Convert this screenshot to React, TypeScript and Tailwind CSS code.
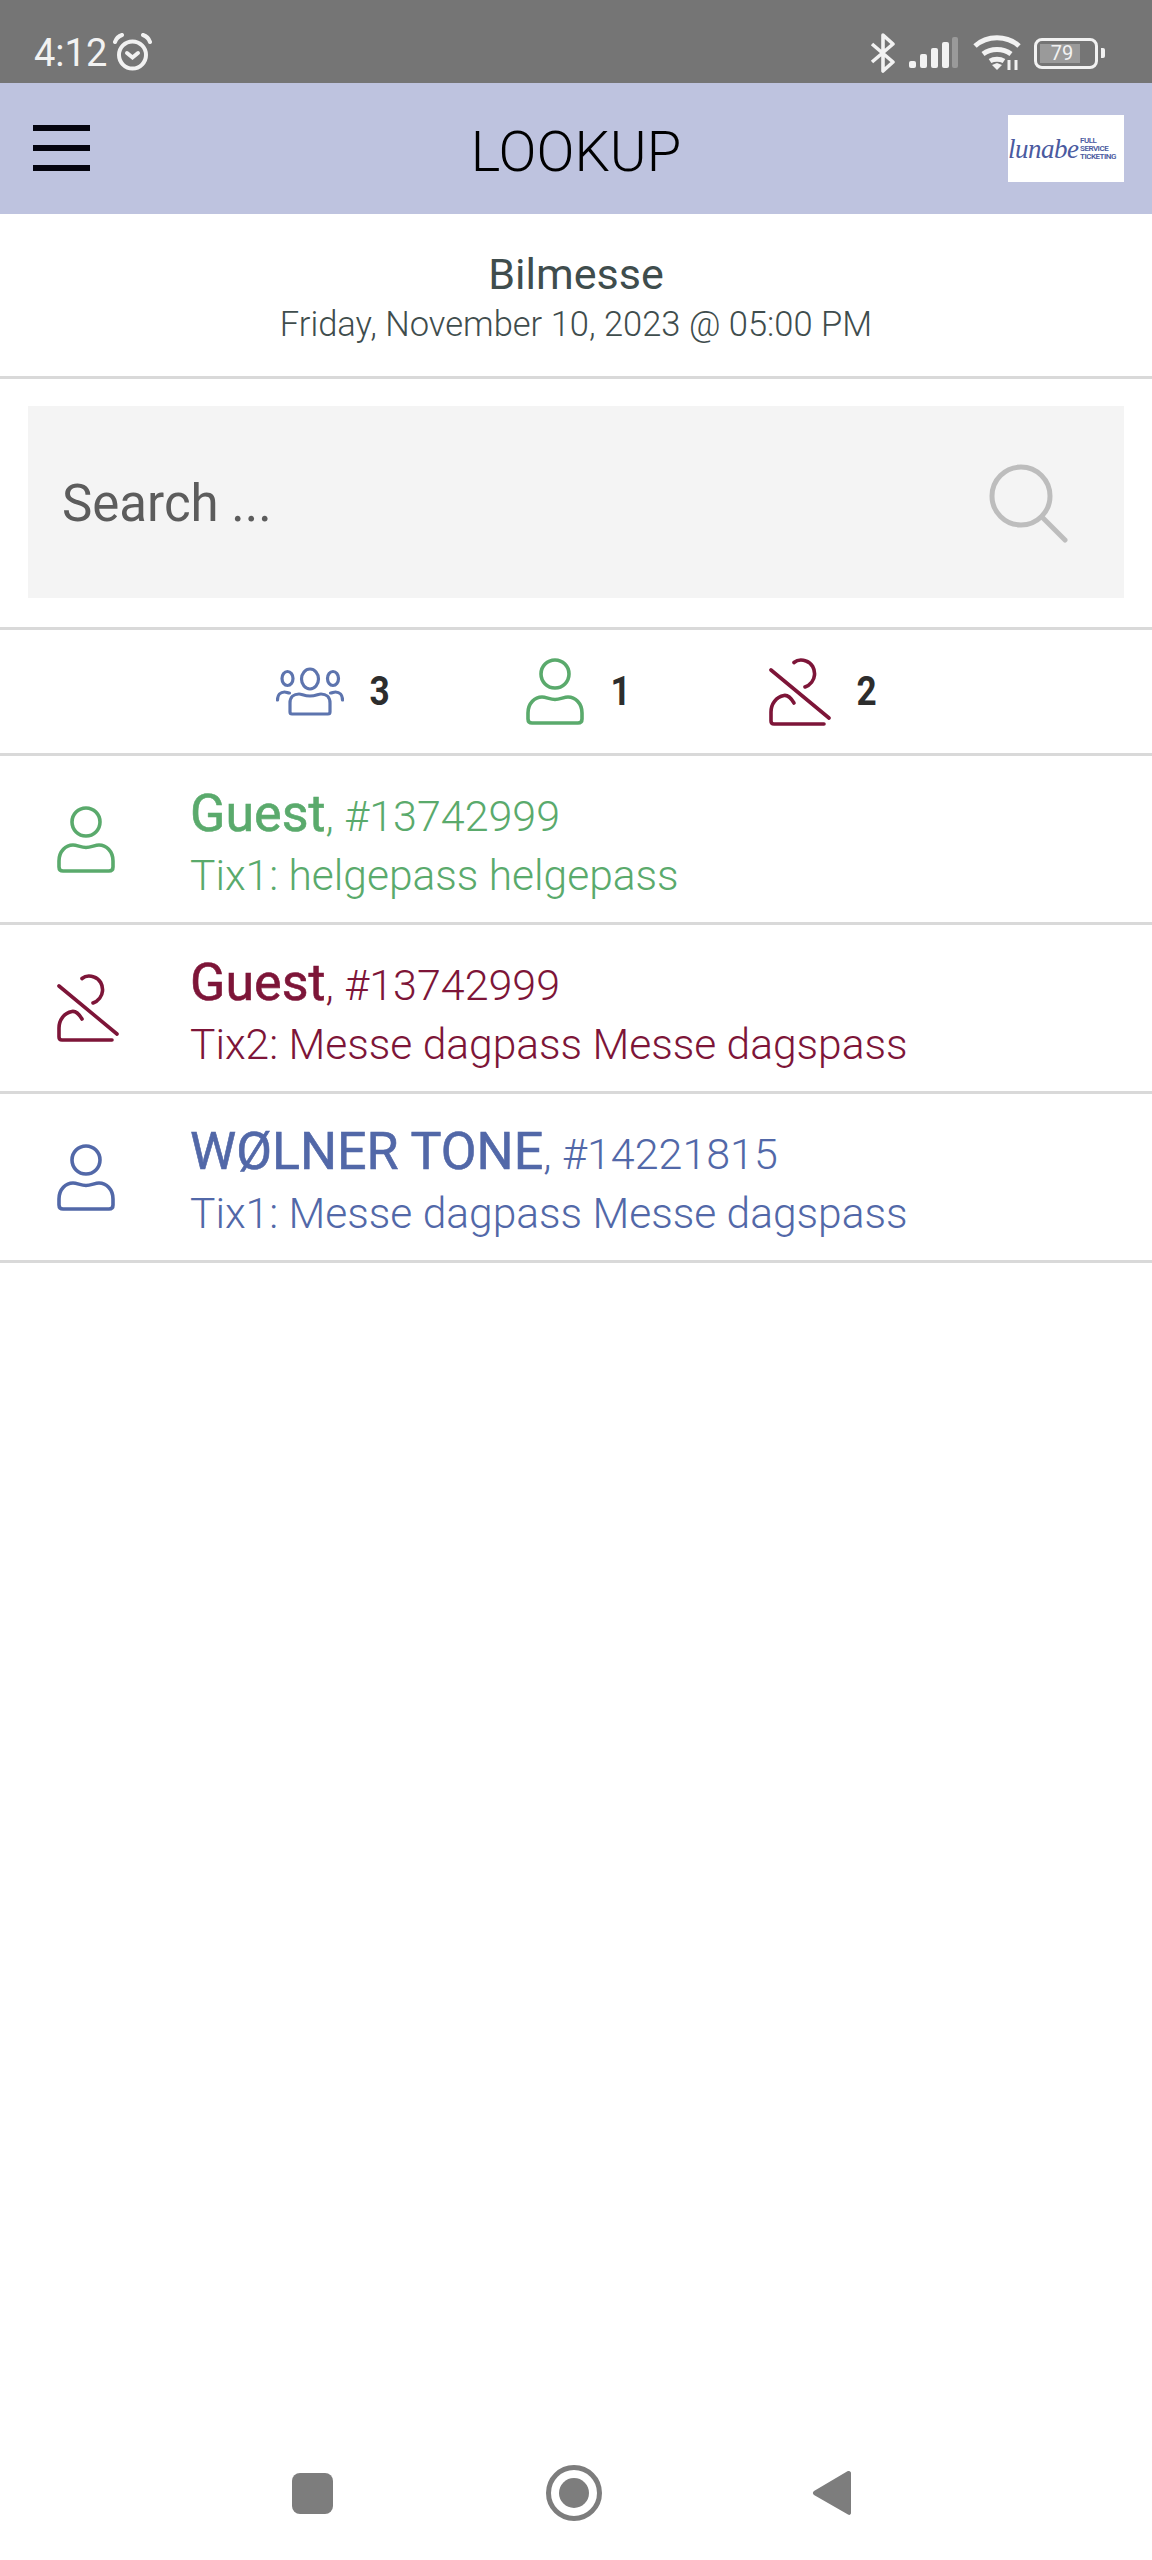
const font = "font-['Roboto','Liberation_Sans',sans-serif]";

function PersonIcon({ className }: { className: string }) {
  return (
    <svg viewBox="0 0 58 67" fill="none" stroke="currentColor" strokeWidth="3.600" className={className}>
      <circle cx="29" cy="16" r="14" />
      <path d="M2 55c0-10 7-16 14-16 4 0 8 2.500 13 2.500S38 39 42 39c7 0 14 6 14 16v6c0 3-1.500 4-4 4H6c-2.500 0-4-1-4-4z" strokeLinejoin="round" />
    </svg>
  );
}

function PersonOffIcon({ className }: { className: string }) {
  return (
    <svg viewBox="0 0 62 68" fill="none" stroke="currentColor" strokeWidth="3.600" strokeLinecap="round" className={className}>
      <path d="M25 4.500C28 2 33 1.500 37 3c6 2 9 8 8.500 14-.4 5-4 10-9.500 12" />
      <path d="M2 12l58 48" />
      <path d="M25 45c-3-5-7-8-10-7.500C7 39 2 46 2 54v9c0 2 1 3 3 3h50" />
    </svg>
  );
}

function GroupIcon({ className }: { className: string }) {
  return (
    <svg viewBox="0 0 68 49" fill="none" stroke="currentColor" strokeWidth="3.200" strokeLinecap="round" className={className}>
      <ellipse cx="34" cy="12" rx="8.500" ry="10" />
      <ellipse cx="11.500" cy="11.500" rx="5.500" ry="7" />
      <ellipse cx="57" cy="11.500" rx="5.500" ry="7" />
      <path d="M16 47c-1.500 0-2-1-2-2V36c0-6 4-9 9-9 3 0 5 2 11 2s8-2 11-2c5 0 9 3 9 9v9c0 1-.5 2-2 2z" strokeLinejoin="round" />
      <path d="M1.500 33c0-5 3-8 7-8 2 0 3 1 5 1" />
      <path d="M66.500 33c0-5-3-8-7-8-2 0-3 1-5 1" />
    </svg>
  );
}

function StatusBar() {
  return (
    <div className="h-[83px] bg-[#757575] flex items-center justify-between pt-[23px] pl-[34px] pr-[47px] text-[#f2f2f2]">
      <div className="flex items-center gap-[5px]">
        <span className="text-[38px] leading-none">4:12</span>
        <svg viewBox="0 0 41 38" fill="none" stroke="currentColor" strokeWidth="4" strokeLinecap="round" className="w-[41px] h-[38px] mt-[-3px]">
          <circle cx="20.500" cy="22" r="13.500" />
          <path d="M15 20l5.500 4.500L26 20" />
          <path d="M3 9c1-3 4-6 7-7" />
          <path d="M38 9c-1-3-4-6-7-7" />
        </svg>
      </div>
      <div className="flex items-center">
        <svg viewBox="0 0 26 40" fill="none" stroke="currentColor" strokeWidth="3.600" className="w-[26px] h-[40px]">
          <path d="M2 11l21 18-10 9V2l10 9-21 18" strokeLinejoin="round" />
        </svg>
        <svg viewBox="0 0 50 32" className="w-[50px] h-[32px] ml-[13px]" fill="currentColor">
          <rect x="0" y="24" width="7" height="7" rx="2" />
          <rect x="11" y="17" width="7" height="14" rx="2" />
          <rect x="22" y="11" width="7" height="20" rx="2" />
          <rect x="33" y="5" width="7" height="26" rx="2" />
          <rect x="43" y="0" width="6" height="31" rx="2" fillOpacity="0.3" />
        </svg>
        <svg viewBox="0 0 48 36" fill="none" stroke="currentColor" strokeWidth="5" className="w-[48px] h-[36px] ml-[14px]">
          <path d="M2 11c12-11 32-11 44 0" />
          <path d="M10 19c8-6 20-6 28 0" />
          <path d="M17 26c4-2.500 10-2.500 14 0" />
          <path d="M19 30l5-2 5 2-5 5z" fill="currentColor" stroke="none" />
          <path d="M36 25v10M43 35V25" strokeWidth="3" />
        </svg>
        <div className="relative ml-[13px] w-[64px] h-[31px] rounded-[8px] border-[3px] border-[#f2f2f2] p-[3px]">
          <div className="h-full w-[40px] bg-[#9a9a9a]" />
          <span className="absolute inset-0 flex items-center justify-center pr-[8px] text-[20px] leading-none">79</span>
        </div>
        <div className="ml-[3px] w-[4px] h-[10px] rounded-r-[2px] bg-[#f2f2f2]" />
      </div>
    </div>
  );
}

function Header() {
  return (
    <div className="relative h-[131px] bg-[#bec3df] flex items-center justify-center">
      <div className="absolute left-[33px] top-[42px] w-[57px] flex flex-col gap-[14px]">
        <div className="h-[6px] bg-[#05050f]" />
        <div className="h-[6px] bg-[#05050f]" />
        <div className="h-[6px] bg-[#05050f]" />
      </div>
      <h1 className="text-[56px] leading-none font-light text-black mt-[6px]">LOOKUP</h1>
      <div className="absolute left-[1008px] top-[32px] w-[116px] h-[67px] bg-white flex items-center overflow-hidden">
        <span className="w-[66px] shrink-0 font-['Liberation_Serif',serif] italic text-[27px] leading-none text-[#4a5aa0] tracking-[-0.5px] mt-[2px]">lunabe</span>
        <div className="ml-[6px] flex flex-col text-[8px] leading-[8px] font-semibold text-[#4a5aa0] tracking-[-0.5px] whitespace-nowrap">
          <span>FULL</span>
          <span>SERVICE</span>
          <span>TICKETING</span>
        </div>
      </div>
    </div>
  );
}

function Stat({ icon, count, gap }: { icon: React.ReactNode; count: number; gap: string }) {
  return (
    <div className={`flex items-center ${gap}`}>
      {icon}
      <span className="w-[23px] text-center text-[40px] leading-none font-bold text-[#2d2d2d] scale-x-[0.88]">{count}</span>
    </div>
  );
}

const rows = [
  { name: "Guest", id: "#13742999", tix: "Tix1: helgepass helgepass", color: "text-[#5aaa6c]", off: false },
  { name: "Guest", id: "#13742999", tix: "Tix2: Messe dagpass Messe dagspass", color: "text-[#7d1538]", off: true },
  { name: "WØLNER TONE", id: "#14221815", tix: "Tix1: Messe dagpass Messe dagspass", color: "text-[#5268a8]", off: false },
];

export default function App() {
  return (
    <div className={`relative w-[1152px] h-[2560px] bg-white overflow-hidden ${font}`}>
      <StatusBar />
      <Header />

      {/* event */}
      <div className="h-[165px] flex flex-col items-center border-b-[3px] border-[#d9d9d9] pt-[36px]">
        <div className="text-[43px] leading-[48px] text-[#3f4d4d]">Bilmesse</div>
        <div className="text-[34.500px] leading-[40px] font-light text-[#3f4d4d] mt-[6px]">Friday, November 10, 2023 @ 05:00 PM</div>
      </div>

      {/* search */}
      <div className="h-[251px] border-b-[3px] border-[#d9d9d9] px-[28px] pt-[27px]">
        <div className="h-[192px] bg-[#f4f4f4] flex items-center justify-between pt-[3px] pl-[34px] pr-[56px]">
          <span className="text-[51px] leading-none text-[#5c5c5c]">Search ...</span>
          <svg viewBox="0 0 80 80" fill="none" stroke="#bdbdbd" strokeWidth="5" strokeLinecap="round" className="w-[80px] h-[80px]">
            <circle cx="33" cy="32" r="29" />
            <path d="M54 53l23 23" />
          </svg>
        </div>
      </div>

      {/* stats */}
      <div className="h-[126px] border-b-[3px] border-[#d9d9d9] flex items-center pl-[276px]">
        <Stat gap="gap-[24px]" count={3} icon={<GroupIcon className="w-[68px] h-[49px] text-[#5d74ae]" />} />
        <div className="ml-[135px]">
          <Stat gap="gap-[25px]" count={1} icon={<PersonIcon className="w-[58px] h-[67px] text-[#5aaa6c]" />} />
        </div>
        <div className="ml-[137px]">
          <Stat gap="gap-[24px]" count={2} icon={<PersonOffIcon className="w-[62px] h-[68px] text-[#7d1538]" />} />
        </div>
      </div>

      {/* list */}
      {rows.map((r, i) => (
        <div key={i} className={`h-[169px] border-b-[3px] border-[#d9d9d9] flex items-center ${r.color}`}>
          <div className="w-[190px] pl-[57px] shrink-0">
            {r.off ? <PersonOffIcon className="w-[62px] h-[68px]" /> : <PersonIcon className="w-[58px] h-[67px]" />}
          </div>
          <div className="flex flex-col pt-[5px]">
            <div className="leading-[60px] whitespace-nowrap">
              <span className="text-[52px] [-webkit-text-stroke:0.6px_currentColor]">{r.name}</span>
              <span className="text-[43px] font-light">, {r.id}</span>
            </div>
            <div className="text-[42.500px] leading-[48px] font-light mt-[-4px] whitespace-nowrap">{r.tix}</div>
          </div>
        </div>
      ))}

      {/* nav bar */}
      <div className="absolute bottom-[17px] left-0 right-0 h-[100px]">
        <div className="flex items-center h-full pl-[292px]">
          <div className="w-[41px] h-[41px] rounded-[8px] bg-[#7d7d7d]" />
          <div className="ml-[213px] w-[56px] h-[56px] rounded-full border-[5px] border-[#7d7d7d] flex items-center justify-center">
            <div className="w-[30px] h-[30px] rounded-full bg-[#7d7d7d]" />
          </div>
          <svg viewBox="0 0 40 48" className="ml-[210px] w-[40px] h-[48px]" fill="#7d7d7d">
            <path d="M37 2c1 0 2 1 2 2v40c0 1.500-1.500 2.500-3 1.500L2 26c-1.500-1-1.500-3 0-4L35 2.500c.7-.4 1.300-.5 2-.5z" />
          </svg>
        </div>
      </div>
    </div>
  );
}
